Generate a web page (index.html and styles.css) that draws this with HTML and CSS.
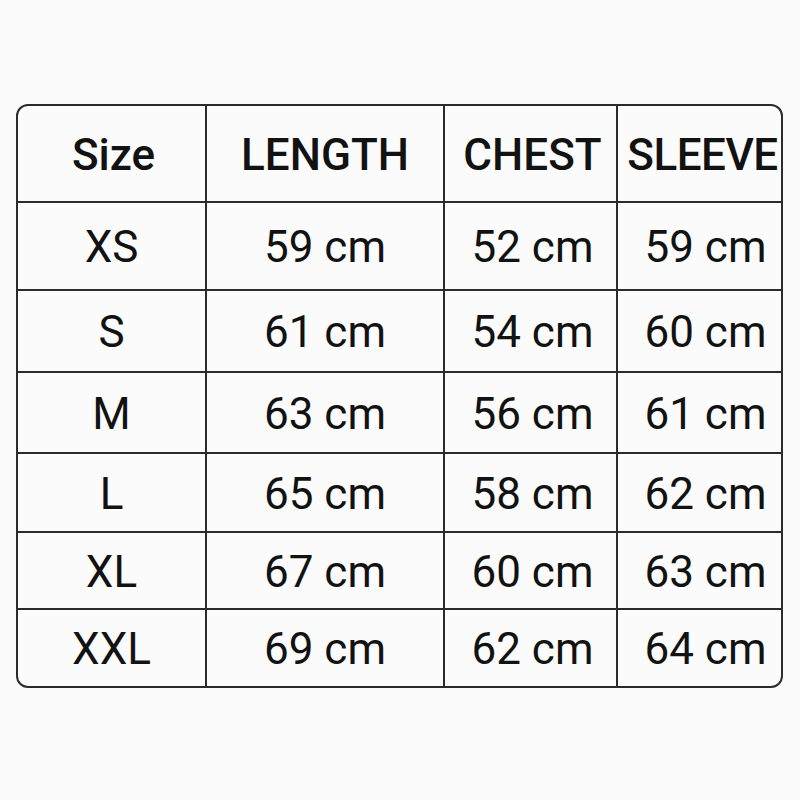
FILE: index.html
```html
<!DOCTYPE html>
<html lang="en">
<head>
<meta charset="utf-8">
<title>Size chart</title>
<link rel="stylesheet" href="styles.css">
</head>
<body>
<div class="chart">
  <div class="cell head c1">Size</div>
  <div class="cell head c2">LENGTH</div>
  <div class="cell head c3">CHEST</div>
  <div class="cell head c4">SLEEVE</div>

  <div class="cell c1">XS</div>
  <div class="cell c2">59 cm</div>
  <div class="cell c3">52 cm</div>
  <div class="cell c4">59 cm</div>

  <div class="cell c1">S</div>
  <div class="cell c2">61 cm</div>
  <div class="cell c3">54 cm</div>
  <div class="cell c4">60 cm</div>

  <div class="cell c1">M</div>
  <div class="cell c2">63 cm</div>
  <div class="cell c3">56 cm</div>
  <div class="cell c4">61 cm</div>

  <div class="cell c1">L</div>
  <div class="cell c2">65 cm</div>
  <div class="cell c3">58 cm</div>
  <div class="cell c4">62 cm</div>

  <div class="cell c1">XL</div>
  <div class="cell c2">67 cm</div>
  <div class="cell c3">60 cm</div>
  <div class="cell c4">63 cm</div>

  <div class="cell last c1">XXL</div>
  <div class="cell last c2">69 cm</div>
  <div class="cell last c3">62 cm</div>
  <div class="cell last c4">64 cm</div>
</div>
</body>
</html>
```
FILE: styles.css
```css
html, body {
  margin: 0;
  padding: 0;
  background: #fafafa;
}

body {
  padding: 104px 0 0 16px;
  font-family: Roboto, "Liberation Sans", sans-serif;
  color: #121212;
}

.chart {
  width: 767px;
  box-sizing: border-box;
  border: 2px solid #2b2b2b;
  border-radius: 12px;
  overflow: hidden;
  background: #fbfbfb;
  display: grid;
  grid-template-columns: 189px 238px 173px 163px;
  grid-template-rows: 97px 88px 82px 81px 79px 77px 76px;
}

.cell {
  box-sizing: border-box;
  display: flex;
  align-items: center;
  justify-content: center;
  border-right: 2px solid #2b2b2b;
  border-bottom: 2px solid #2b2b2b;
  font-size: 44px;
  font-weight: 400;
  padding-top: 2px;
  white-space: nowrap;
}

.cell.c4 {
  border-right: none;
  padding-left: 12px;
}

.cell.c3 {
  padding-left: 4px;
}

.cell.last {
  border-bottom: none;
}

.cell.head {
  font-size: 44px;
  font-weight: 500;
  padding-top: 2px;
}

.cell.head.c1 {
  padding-left: 4px;
}

.cell.head.c4 {
  padding-left: 6px;
  letter-spacing: -0.5px;
}
```
